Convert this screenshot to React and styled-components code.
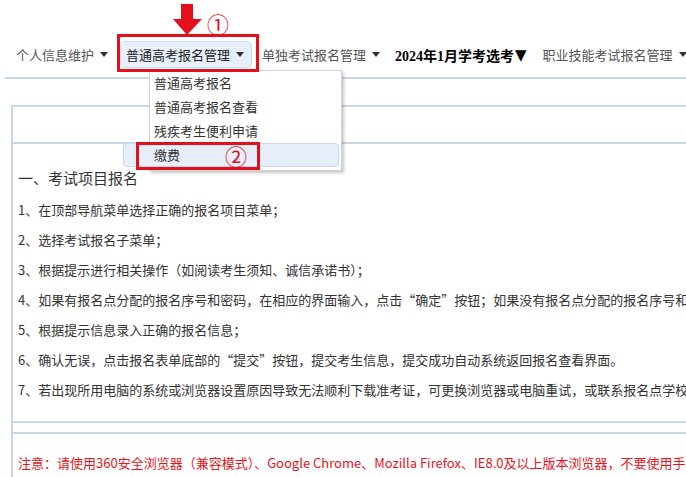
import React from 'react'
import styled, { createGlobalStyle } from 'styled-components'

const GlobalStyle = createGlobalStyle`
  html, body {
    margin: 0;
    padding: 0;
    background: #fff;
  }
`

const line = '#c8d8ea'
const red = '#e3101b'

const Page = styled.div`
  position: relative;
  width: 686px;
  height: 477px;
  overflow: hidden;
  font-family: "Noto Sans CJK SC", "Liberation Sans", sans-serif;
  color: #333;
`

const Nav = styled.nav`
  display: flex;
  align-items: center;
  height: 27px;
  margin-top: 41px;
  padding-left: 16px;
  white-space: nowrap;
  font-size: 13px;
  color: #555;
`

const NavItem = styled.div`
  position: relative;
  display: flex;
  align-items: center;
  flex-shrink: 0;
  box-sizing: border-box;
  height: 27px;
  margin-right: ${props => props.gap || 0}px;
  padding: ${props => props.active ? '0 7px 0 5px' : '0'};
  background: ${props => props.active ? '#e7effa' : 'transparent'};
  border: ${props => props.active ? '1px solid #cddcf0' : 'none'};
  border-radius: 5px;
  color: ${props => props.active ? '#222' : props.strong ? '#000' : '#555'};
  font-family: ${props => props.strong ? '"Liberation Serif", "Noto Sans CJK SC", serif' : 'inherit'};
  font-weight: ${props => props.strong ? 'bold' : 'normal'};
  font-size: ${props => props.strong ? '14px' : '13px'};
`

const Caret = styled.span`
  display: inline-block;
  width: 0;
  height: 0;
  margin-left: 6px;
  border-left: 4px solid transparent;
  border-right: 4px solid transparent;
  border-top: 5px solid #333;
`

const BigTri = styled.span`
  font-family: "DejaVu Sans", sans-serif;
  font-size: 15px;
  font-weight: normal;
  margin-left: 1px;
`

const Divider = styled.div`
  margin: 9px 0 0 5px;
  border-top: 2px solid ${line};
`

const Box = styled.div`
  margin: 26px 0 0 11px;
  border-left: 2px solid ${line};
  border-top: 2px solid ${line};
  white-space: nowrap;
`

const BoxHead = styled.div`
  height: 35px;
  border-bottom: 2px solid ${line};
`

const BoxBody = styled.div`
  padding: 22px 0 16px 5px;
  border-bottom: 2px solid ${line};
`

const Heading = styled.div`
  font-size: 15px;
  line-height: 24px;
  margin-bottom: 5px;
  color: #333;
`

const Step = styled.div`
  font-size: 13px;
  line-height: 30px;
  color: #333;
`

const Gap = styled.div`
  height: 9px;
  border-bottom: 2px solid ${line};
`

const Note = styled.div`
  padding: 14px 0 0 5px;
  font-size: 13px;
  line-height: 30px;
  color: #e8141c;
`

const Menu = styled.div`
  position: absolute;
  left: 28px;
  top: 28px;
  width: 193px;
  box-sizing: border-box;
  padding-bottom: 3px;
  background: #fff;
  border: 1px solid #d2d2d2;
  box-shadow: 2px 2px 3px rgba(0, 0, 0, 0.22);
  z-index: 2;
`

const MenuItem = styled.div`
  position: relative;
  box-sizing: border-box;
  height: 24px;
  line-height: ${props => props.hover ? '22px' : '24px'};
  font-size: 13px;
  color: #333;
  padding-left: ${props => props.hover ? '30px' : '4px'};
  margin: ${props => props.hover ? '0 2px 0 -27px' : '0'};
  background: ${props => props.hover ? '#e6eefa' : 'transparent'};
  border: ${props => props.hover ? '1px solid #c6d8f0' : 'none'};
  border-radius: 4px;
`

const RedFrame = styled.div`
  position: absolute;
  left: ${props => props.x}px;
  top: ${props => props.y}px;
  width: ${props => props.w}px;
  height: ${props => props.h}px;
  box-sizing: border-box;
  border: 3px solid ${red};
  pointer-events: none;
  z-index: 3;
`

const Mark = styled.span`
  position: absolute;
  left: ${props => props.x}px;
  top: ${props => props.y}px;
  font-family: "Noto Sans CJK SC", sans-serif;
  font-size: 22px;
  line-height: 22px;
  font-weight: normal;
  color: ${red};
  z-index: 3;
`

const Arrow = styled.svg`
  position: absolute;
  left: 52px;
  top: -38px;
  z-index: 3;
`

const steps = [
  '1、在顶部导航菜单选择正确的报名项目菜单；',
  '2、选择考试报名子菜单；',
  '3、根据提示进行相关操作（如阅读考生须知、诚信承诺书）；',
  '4、如果有报名点分配的报名序号和密码，在相应的界面输入，点击“确定”按钮；如果没有报名点分配的报名序号和密码，请直接点击“下一步”',
  '5、根据提示信息录入正确的报名信息；',
  '6、确认无误，点击报名表单底部的“提交”按钮，提交考生信息，提交成功自动系统返回报名查看界面。',
  '7、若出现所用电脑的系统或浏览器设置原因导致无法顺利下载准考证，可更换浏览器或电脑重试，或联系报名点学校处理。',
]

export default function App() {
  return (
    <Page>
      <GlobalStyle />
      <Nav>
        <NavItem gap={12}>个人信息维护<Caret /></NavItem>
        <NavItem gap={10} active>
          普通高考报名管理<Caret />
          <Arrow width="30" height="31" viewBox="0 0 30 31">
            <path d="M8 0 H20 V15 H29 L14 31 L0 15 H8 Z" fill={red} />
          </Arrow>
          <Mark x={86} y={-30}>①</Mark>
          <RedFrame x={-4} y={-8} w={142} h={38} />
          <Menu>
            <MenuItem>普通高考报名</MenuItem>
            <MenuItem>普通高考报名查看</MenuItem>
            <MenuItem>残疾考生便利申请</MenuItem>
            <MenuItem hover>
              缴费
              <Mark x={101} y={0}>②</Mark>
              <RedFrame x={12} y={-2} w={124} h={28} />
            </MenuItem>
          </Menu>
        </NavItem>
        <NavItem gap={15}>单独考试报名管理<Caret /></NavItem>
        <NavItem gap={16} strong>2024年1月学考选考<BigTri>▼</BigTri></NavItem>
        <NavItem>职业技能考试报名管理<Caret /></NavItem>
      </Nav>
      <Divider />
      <Box>
        <BoxHead />
        <BoxBody>
          <Heading>一、考试项目报名</Heading>
          {steps.map(s => <Step key={s}>{s}</Step>)}
        </BoxBody>
        <Gap />
        <Note>注意：请使用360安全浏览器（兼容模式）、Google Chrome、Mozilla Firefox、IE8.0及以上版本浏览器，不要使用手机浏览器。</Note>
      </Box>
    </Page>
  )
}
